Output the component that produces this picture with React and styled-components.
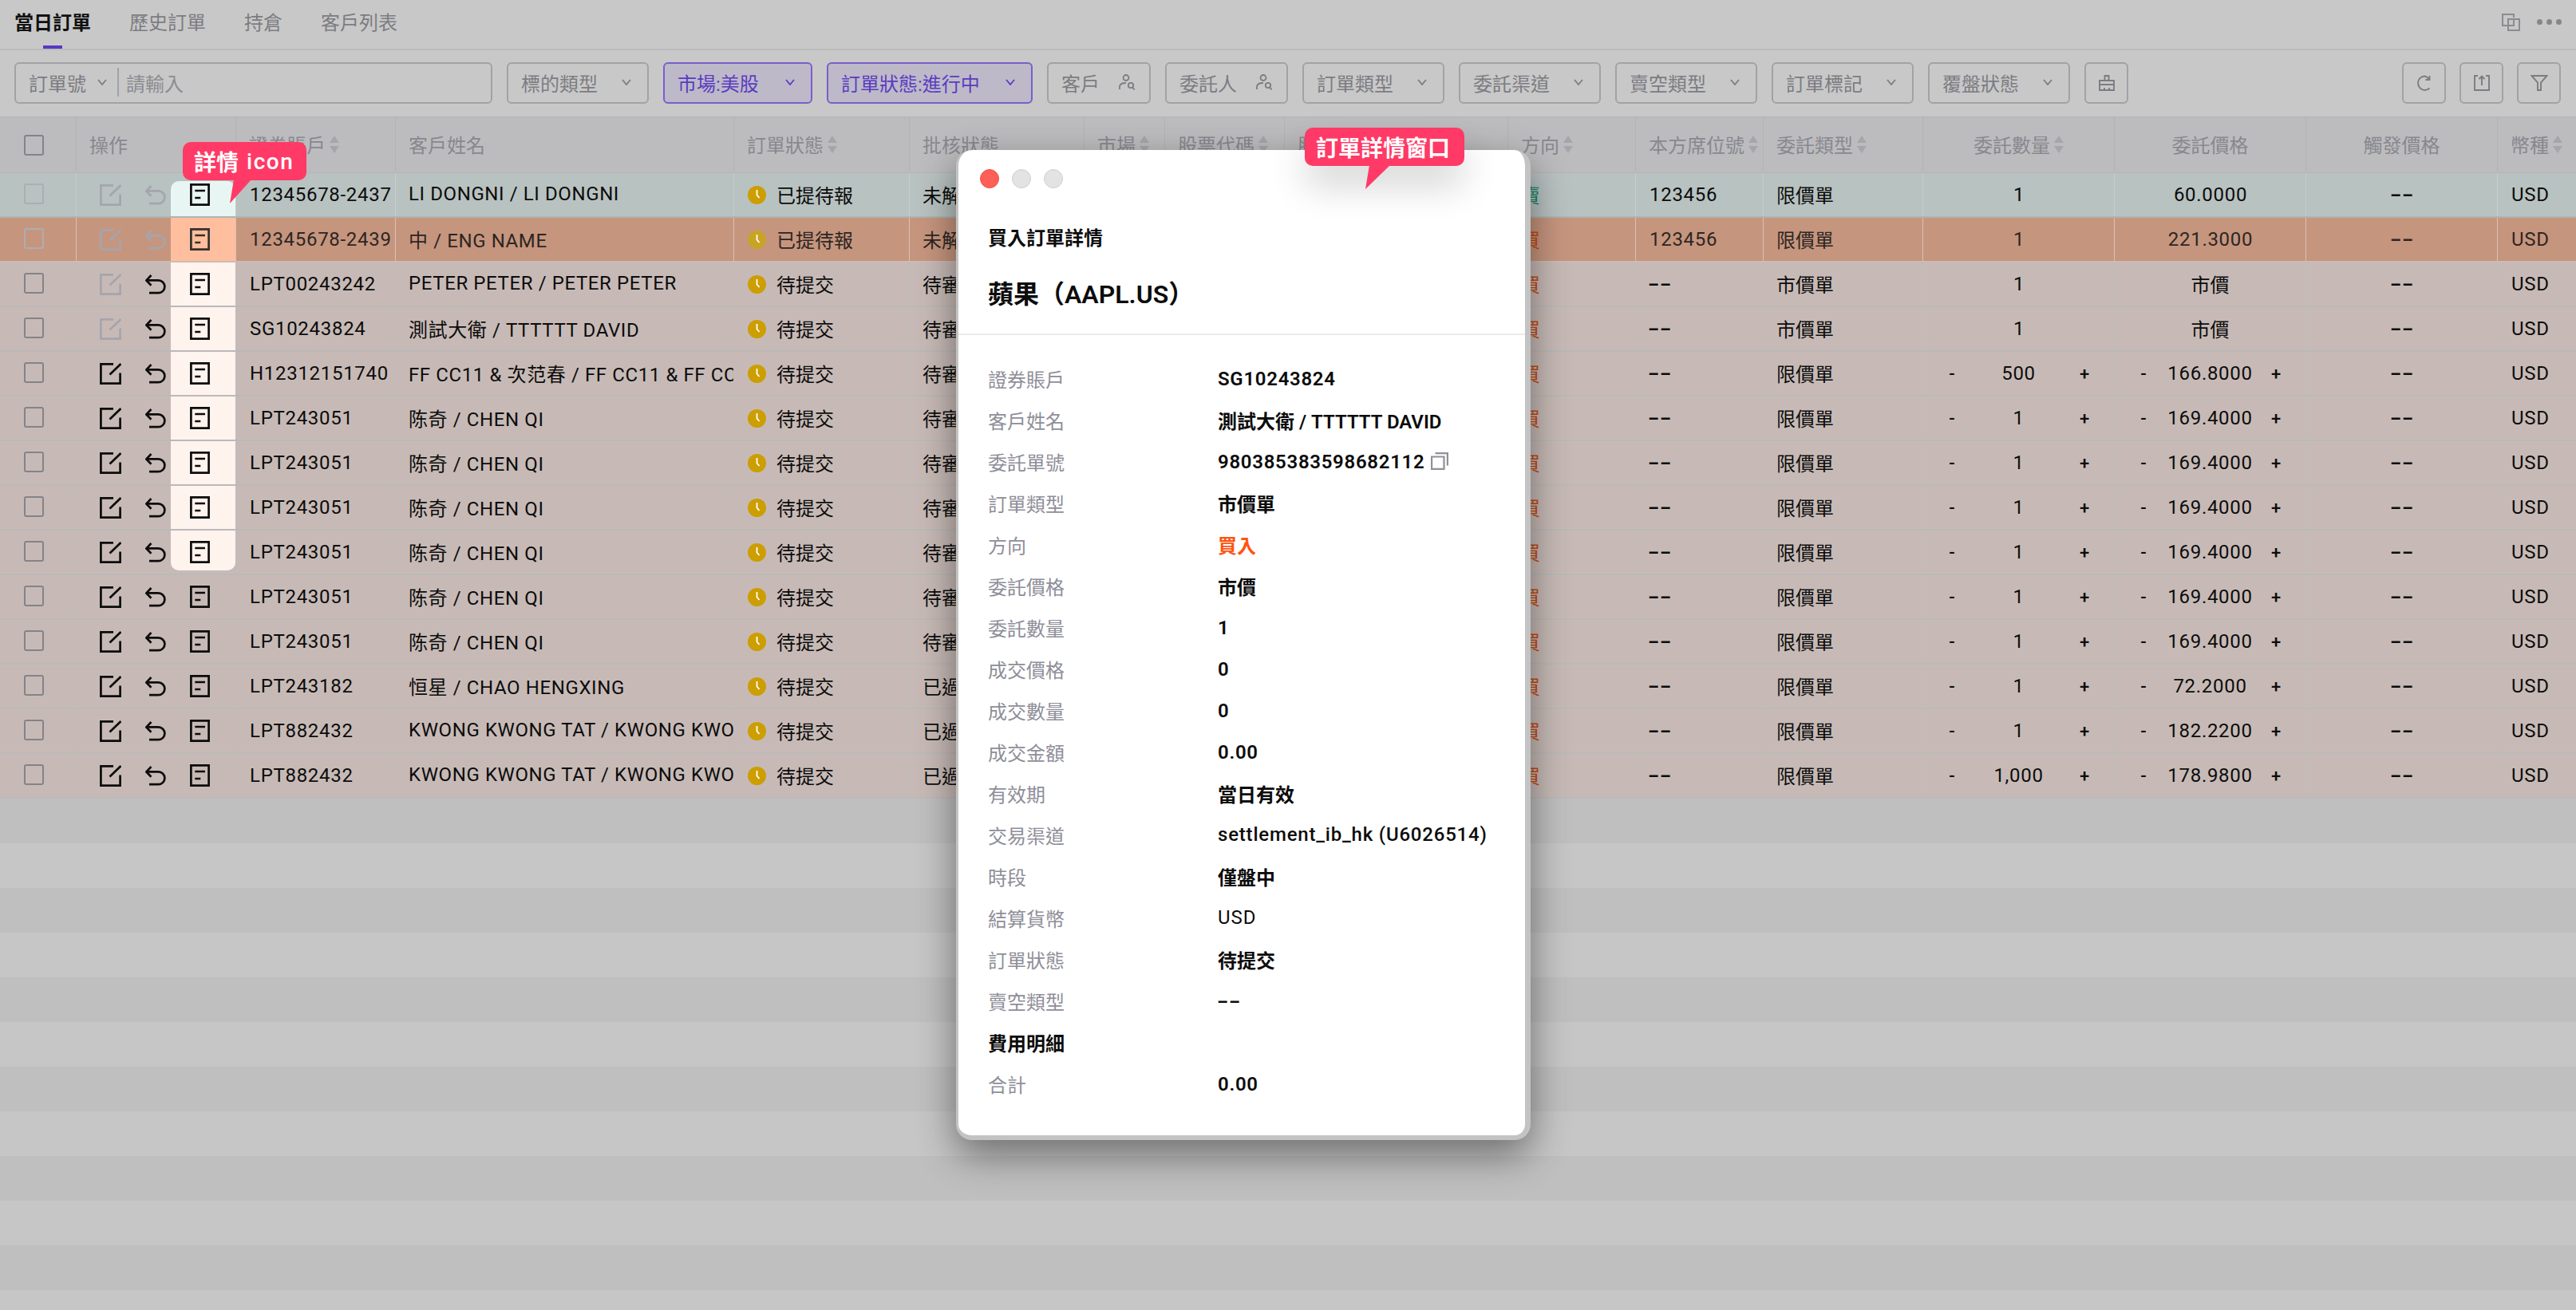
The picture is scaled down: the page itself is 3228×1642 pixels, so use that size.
import React from "react";
import styled, { createGlobalStyle } from "styled-components";

const Global = createGlobalStyle`
  html, body { margin: 0; padding: 0; background: #c8c8c8; }
  * { box-sizing: border-box; }
  body { font-family: Roboto, "Noto Sans CJK TC", sans-serif; font-size: 24px; color: #0c0c0c; }
`;

const Page = styled.div`
  position: relative;
  width: 3228px;
  height: 1642px;
  overflow: hidden;
  background: #c8c8c8;
`;

// top tabs
const Tabs = styled.div`
  height: 63px;
  padding: 0 18px 0 18px;
  display: flex;
  gap: 48px;
  border-bottom: 2px solid #bcbcbc;
`;
const Tab = styled.div`
  position: relative;
  height: 57px;
  line-height: 58px;
  color: ${(p) => (p.$active ? "#111" : "#7c7c82")};
  font-weight: ${(p) => (p.$active ? 600 : 400)};
  ${(p) =>
    p.$active &&
    `&:after { content: ""; position: absolute; left: 36px; bottom: -4px; width: 24px; height: 4px; background: #5b36c4; }`}
`;
const TabTools = styled.div`
  margin-left: auto;
  display: flex;
  align-items: center;
  gap: 21px;
  height: 55px;
  color: #8b8b90;
`;
const Dots = styled.div`
  display: flex;
  gap: 5px;
  width: 31px;
  span { width: 7px; height: 7px; border-radius: 50%; background: #86868b; }
`;

// filter bar
const Toolbar = styled.div`
  height: 83px;
  padding: 15px 19px 16px 18px;
  display: flex;
  gap: 18px;
`;
const Filter = styled.div`
  width: ${(p) => p.$w}px;
  height: 52px;
  flex: none;
  padding: 0 ${(p) => p.$pr || 20}px 2px 16px;
  display: flex;
  align-items: center;
  justify-content: space-between;
  border: 2px solid ${(p) => (p.$on ? "#7a5ecb" : "#a2a2a7")};
  border-radius: 6px;
  background: ${(p) => (p.$on ? "#bdb9c9" : "transparent")};
  color: ${(p) => (p.$on ? "#5a3cc0" : "#7c7c82")};
`;
const SearchBox = styled(Filter)`
  padding: 0 0 2px 16px;
  justify-content: flex-start;
`;
const SearchKey = styled.div`
  display: flex;
  align-items: center;
  gap: 14px;
  padding-right: 13px;
  height: 36px;
  border-right: 2px solid #a2a2a7;
`;
const SearchHint = styled.div`
  padding-left: 9px;
  color: #8c8c92;
`;
const IconButton = styled.div`
  width: 55px;
  height: 52px;
  flex: none;
  display: flex;
  align-items: center;
  justify-content: center;
  border: 2px solid #a2a2a7;
  border-radius: 6px;
  color: #7c7c82;
`;
const RightTools = styled.div`
  margin-left: auto;
  display: flex;
  gap: 17px;
`;

// table
const columns = "95px 200px 200px 424px 220px 219px 101px 150px 280px 160px 160px 200px 240px 240px 240px 99px";
const HeadRow = styled.div`
  display: grid;
  grid-template-columns: ${columns};
  height: 71px;
  background: #bcbcbe;
  border-top: 1px solid #b4b4b6;
  border-bottom: 1px solid #b6b6b8;
`;
const HeadCell = styled.div`
  display: flex;
  align-items: center;
  justify-content: ${(p) => (p.$center ? "center" : "flex-start")};
  gap: 5px;
  padding-left: ${(p) => (p.$center ? 0 : 16)}px;
  padding-bottom: 2px;
  border-left: 1px solid #b3b3b5;
  color: #88888e;
  white-space: nowrap;
  overflow: hidden;
`;
const HeadCheck = styled.div`
  display: flex;
  align-items: center;
  padding-left: 30px;
`;
const SortMark = styled.span`
  display: inline-flex;
  flex-direction: column;
  gap: 4px;
  flex: none;
  &:before, &:after {
    content: "";
    width: 0;
    height: 0;
    border-left: 6px solid transparent;
    border-right: 6px solid transparent;
  }
  &:before { border-bottom: 9px solid #a6a6aa; }
  &:after { border-top: 9px solid #a6a6aa; }
`;
const tones = {
  normal: { bg: "#c7bab6", line: "#bcb9b8", cell: "#bfbcbb", spot: "#fff3ee" },
  teal: { bg: "#b8c2c0", line: "#adb5b4", cell: "#c6cdcc", spot: "#e8f6f3" },
  orange: { bg: "#c6957e", line: "#c9bcb5", cell: "#d8c2b6", spot: "#ffbf9e" },
};
const Row = styled.div`
  display: grid;
  grid-template-columns: ${columns};
  height: 56px;
  background: ${(p) => tones[p.$tone].bg};
  border-bottom: 2px solid ${(p) => tones[p.$tone].line};
  color: ${(p) => (p.$tone === "orange" ? "#2c2622" : "#0c0c0c")};
`;
const Cell = styled.div`
  display: flex;
  align-items: center;
  justify-content: ${(p) => (p.$center ? "center" : "flex-start")};
  padding-left: ${(p) => (p.$center ? 0 : 16)}px;
  padding-bottom: 2px;
  border-left: ${(p) => (p.$first ? "none" : `1px solid ${tones[p.$tone].cell}`)};
  white-space: nowrap;
  overflow: hidden;
`;
const CheckCell = styled(Cell)`
  padding-left: 30px;
`;
const CheckBox = styled.span`
  width: 25px;
  height: 26px;
  border: 2px solid ${(p) => (p.$off ? "#adadb2" : "#83838a")};
  border-radius: 3px;
`;
const ActionCell = styled(Cell)`
  padding: 0;
  align-items: stretch;
  justify-content: space-between;
`;
const ActionIcons = styled.div`
  display: flex;
  align-items: center;
  gap: 30px;
  padding-left: 29px;
`;
const Spot = styled.div`
  width: 81px;
  flex: none;
  display: flex;
  align-items: center;
  justify-content: center;
  padding-right: 8px;
  color: ${(p) => (p.$dim ? "#33312f" : "#0c0c0c")};
  background: ${(p) => p.$bg || "transparent"};
  ${(p) => p.$start && "margin-top: 10px; padding-bottom: 10px; border-radius: 10px 10px 0 0;"}
  ${(p) => p.$end && "margin-bottom: 4px; padding-top: 4px; border-radius: 0 0 10px 10px;"}
`;
const Num = styled.span`
  display: inline-block;
  padding-top: 2px;
  margin-left: 1px;
  letter-spacing: 0.7px;
`;
const Name = styled.span`
  letter-spacing: 0.6px;
`;
const Dash = styled.span`
  display: inline-block;
  font-weight: 600;
  padding-top: 2px;
  margin-left: ${(p) => (p.$left ? 5 : 0)}px;
  transform: scaleX(1.7);
`;
const StatusDot = styled.span`
  width: 23px;
  height: 23px;
  flex: none;
  margin: 2px 13px 0 1px;
  color: ${(p) => (p.$dim ? "#c9a326" : "#cc9e02")};
  display: inline-flex;
`;
const Direction = styled.span`
  color: ${(p) => (p.$sell ? "#14866a" : "#c74a12")};
`;
const Stepper = styled.div`
  width: 100%;
  padding: 0 30px 0 29px;
  display: flex;
  align-items: center;
  justify-content: space-between;
`;
const StepMark = styled.span`
  width: 14px;
  text-align: center;
  font-size: 22px;
  font-weight: 500;
  padding-top: 2px;
`;
const Stripe = styled.div`
  height: 56px;
  background: ${(p) => (p.$light ? "#c6c6c6" : "#bfbfbf")};
`;

// order detail window
const Modal = styled.div`
  position: absolute;
  left: 1198px;
  top: 188px;
  width: 720px;
  background: #fff;
  border-style: solid;
  border-color: #c3c3c3;
  border-width: 0 7px 6px 3px;
  border-radius: 20px;
  box-shadow: 0 18px 48px rgba(0, 0, 0, 0.45);
`;
const ModalHead = styled.div`
  padding: 24px 37px 27px;
  border-bottom: 2px solid #ececec;
`;
const Lights = styled.div`
  display: flex;
  gap: 16px;
  margin-left: -10px;
`;
const Light = styled.span`
  width: 24px;
  height: 24px;
  border-radius: 50%;
  background: ${(p) => (p.$red ? "#fe5f57" : "#e3e3e3")};
  border: 1px solid ${(p) => (p.$red ? "#ee4f47" : "#cfcfcf")};
`;
const ModalKicker = styled.div`
  margin-top: 46px;
  line-height: 34px;
  font-weight: 600;
`;
const ModalTitle = styled.div`
  margin-top: 31px;
  line-height: 44px;
  font-size: 32px;
  font-weight: 600;
`;
const ModalBody = styled.div`
  padding: 28px 0 39px 37px;
`;
const InfoRow = styled.div`
  display: grid;
  grid-template-columns: 288px 1fr;
  align-items: center;
  height: 52px;
`;
const InfoLabel = styled.div`
  color: ${(p) => (p.$strong ? "#0c0c0c" : "#8e8e99")};
  font-weight: ${(p) => (p.$strong ? 600 : 400)};
`;
const InfoValue = styled.div`
  display: flex;
  align-items: center;
  gap: 8px;
  color: ${(p) => (p.$buy ? "#ff5310" : "#0c0c0c")};
  font-weight: ${(p) => p.$weight || 600};
  letter-spacing: ${(p) => p.$track || 0}px;
  white-space: nowrap;
`;
const InfoNum = styled(Num)`
  margin-left: 0;
`;

// pink callouts
const Callout = styled.div`
  position: absolute;
  left: ${(p) => p.$x}px;
  top: ${(p) => p.$y}px;
  width: ${(p) => p.$w}px;
  height: 48px;
  padding-left: 14px;
  display: flex;
  align-items: center;
  background: #ff3a66;
  border-radius: 10px;
  color: #fff;
  font-size: 28px;
  font-weight: 700;
  white-space: pre;
  ${(p) => p.$glow && "box-shadow: 0 26px 46px rgba(0,0,0,.16);"}
`;
const CalloutLatin = styled.span`
  letter-spacing: 1.5px;
  margin-left: 10px;
  font-weight: 500;
`;
const CalloutTail = styled.svg`
  position: absolute;
  left: ${(p) => p.$x}px;
  top: 47px;
`;

const Chevron = () => (
  <svg width="12" height="8" viewBox="0 0 12 8" fill="none" stroke="currentColor" strokeWidth="1.8">
    <path d="M1 1l5 6 5-6" />
  </svg>
);
const PersonSearch = () => (
  <svg width="21" height="20" viewBox="0 0 21 20" fill="none" stroke="currentColor" strokeWidth="1.8">
    <circle cx="9" cy="4.5" r="3.5" />
    <path d="M1 19v-3c0-3 3-5 8-5" />
    <circle cx="15" cy="14" r="3.2" />
    <path d="M17.2 16.5l2.4 3" />
  </svg>
);
const Broom = () => (
  <svg width="22" height="20" viewBox="0 0 22 20" fill="none" stroke="currentColor" strokeWidth="1.9">
    <path d="M8.5 6V1h5v5" />
    <path d="M2 7h18v12H2z" />
    <path d="M2 12h18M8 19v-3M14 19v-3" />
  </svg>
);
const Refresh = () => (
  <svg width="22" height="20" viewBox="0 0 22 20" fill="none" stroke="currentColor" strokeWidth="1.9">
    <path d="M17 5.2a9 9 0 0 0-5.5-3.7C7 1.5 3 5 3 10s4 9 8.5 9a9 9 0 0 0 6-2.500" />
    <path d="M17.500 1v5h-5" />
  </svg>
);
const Export = () => (
  <svg width="20" height="20" viewBox="0 0 20 20" fill="none" stroke="currentColor" strokeWidth="1.9">
    <path d="M5 1H1v18h18V1h-4" />
    <path d="M10 13V1.500M6.500 5L10 1.500 13.500 5" />
  </svg>
);
const Funnel = () => (
  <svg width="22" height="20" viewBox="0 0 22 20" fill="none" stroke="currentColor" strokeWidth="1.9">
    <path d="M1.500 1h19L13 9.500V19h-4V9.500z" />
  </svg>
);
const Windows = () => (
  <svg width="23" height="22" viewBox="0 0 23 22" fill="none" stroke="currentColor" strokeWidth="2">
    <path d="M15 5V1H1v14h7" />
    <path d="M8 7h14v14H8z" />
    <path d="M8 7v8h7V7" />
  </svg>
);
const EditIcon = ({ off }) => (
  <svg width="27" height="27" viewBox="0 0 27 27" fill="none" stroke={off ? "#a5a5ad" : "currentColor"} strokeWidth="2.700">
    <path d="M17 1.400H1.400v24.200h24.200V12.500" />
    <path d="M12.500 14.500L26.500 1" />
  </svg>
);
const UndoIcon = ({ off }) => (
  <svg width="26" height="25" viewBox="0 0 26 25" fill="none" stroke={off ? "#a5a5ad" : "currentColor"} strokeWidth="2.700">
    <path d="M7.500 1L1.400 7.400l6.100 6.300" />
    <path d="M1.400 7.400h15.100a7.900 7.900 0 0 1 0 15.800H5" />
  </svg>
);
const DocIcon = () => (
  <svg width="25" height="28" viewBox="0 0 25 28" fill="none" stroke="currentColor" strokeWidth="2.700">
    <path d="M1.400 1.400h22.200v25.200H1.400z" />
    <path d="M6.300 9h12.700M6.300 18h7" />
  </svg>
);
const ClockIcon = () => (
  <svg width="23" height="23" viewBox="0 0 23 23">
    <circle cx="11.500" cy="11.500" r="11.500" fill="currentColor" />
    <path d="M11.500 5v6.500l3 3.500" fill="none" stroke="#fff" strokeWidth="1.800" />
  </svg>
);
const CopyIcon = () => (
  <svg width="22" height="22" viewBox="0 0 22 22" fill="none" stroke="#8f8f99" strokeWidth="2.200">
    <path d="M1.100 5.500h15.400v15.400H1.100z" />
    <path d="M5.500 1.100h15.400v15.400" />
  </svg>
);

const head = [
  { label: "操作" },
  { label: "證券賬戶", sort: true },
  { label: "客戶姓名" },
  { label: "訂單狀態", sort: true },
  { label: "批核狀態" },
  { label: "市場", sort: true },
  { label: "股票代碼", sort: true },
  { label: "股票名稱" },
  { label: "方向", sort: true },
  { label: "本方席位號", sort: true },
  { label: "委託類型", sort: true },
  { label: "委託數量", sort: true, center: true },
  { label: "委託價格", center: true },
  { label: "觸發價格", center: true },
  { label: "幣種", sort: true },
];

const chen = "陈奇 / CHEN QI";
const kwong = "KWONG KWONG TAT / KWONG KWONG TAT";
const orders = [
  { acc: "12345678-2437", name: "LI DONGNI / LI DONGNI", status: "已提待報", audit: "未解鎖", sell: true, seat: "123456", type: "限價單", qty: "1", price: "60.0000", tone: "teal", off: 2 },
  { acc: "12345678-2439", name: "中 / ENG NAME", status: "已提待報", audit: "未解鎖", seat: "123456", type: "限價單", qty: "1", price: "221.3000", tone: "orange", off: 2 },
  { acc: "LPT00243242", name: "PETER PETER / PETER PETER", status: "待提交", audit: "待審批", type: "市價單", qty: "1", price: "市價", off: 1 },
  { acc: "SG10243824", name: "測試大衛 / TTTTTT DAVID", status: "待提交", audit: "待審批", type: "市價單", qty: "1", price: "市價", off: 1 },
  { acc: "H12312151740", name: "FF CC11 & 次范春 / FF CC11 & FF CC11", status: "待提交", audit: "待審批", type: "限價單", qty: "500", price: "166.8000", step: true },
  { acc: "LPT243051", name: chen, status: "待提交", audit: "待審批", type: "限價單", qty: "1", price: "169.4000", step: true },
  { acc: "LPT243051", name: chen, status: "待提交", audit: "待審批", type: "限價單", qty: "1", price: "169.4000", step: true },
  { acc: "LPT243051", name: chen, status: "待提交", audit: "待審批", type: "限價單", qty: "1", price: "169.4000", step: true },
  { acc: "LPT243051", name: chen, status: "待提交", audit: "待審批", type: "限價單", qty: "1", price: "169.4000", step: true },
  { acc: "LPT243051", name: chen, status: "待提交", audit: "待審批", type: "限價單", qty: "1", price: "169.4000", step: true },
  { acc: "LPT243051", name: chen, status: "待提交", audit: "待審批", type: "限價單", qty: "1", price: "169.4000", step: true },
  { acc: "LPT243182", name: "恒星 / CHAO HENGXING", status: "待提交", audit: "已過審", type: "限價單", qty: "1", price: "72.2000", step: true },
  { acc: "LPT882432", name: kwong, status: "待提交", audit: "已過審", type: "限價單", qty: "1", price: "182.2200", step: true },
  { acc: "LPT882432", name: kwong, status: "待提交", audit: "已過審", type: "限價單", qty: "1,000", price: "178.9800", step: true },
];

const details = [
  { label: "證券賬戶", num: "SG10243824" },
  { label: "客戶姓名", text: "測試大衛 / TTTTTT DAVID" },
  { label: "委託單號", num: "980385383598682112", copy: true },
  { label: "訂單類型", text: "市價單" },
  { label: "方向", text: "買入", buy: true },
  { label: "委託價格", text: "市價" },
  { label: "委託數量", num: "1" },
  { label: "成交價格", num: "0" },
  { label: "成交數量", num: "0" },
  { label: "成交金額", num: "0.00" },
  { label: "有效期", text: "當日有效" },
  { label: "交易渠道", text: "settlement_ib_hk (U6026514)", weight: 500, track: 0.8 },
  { label: "時段", text: "僅盤中" },
  { label: "結算貨幣", text: "USD", weight: 400, track: 1 },
  { label: "訂單狀態", text: "待提交" },
  { label: "賣空類型", dash: true },
  { label: "費用明細", strong: true },
  { label: "合計", num: "0.00" },
];

const filters = [
  ["標的類型", 178],
  ["市場:美股", 187, true],
  ["訂單狀態:進行中", 258, true],
  ["客戶", 130, false, true],
  ["委託人", 154, false, true],
  ["訂單類型", 178],
  ["委託渠道", 178],
  ["賣空類型", 178],
  ["訂單標記", 178],
  ["覆盤狀態", 178],
];

const Stepped = ({ value }) => (
  <Stepper>
    <StepMark>-</StepMark>
    <Num>{value}</Num>
    <StepMark>+</StepMark>
  </Stepper>
);

export default function App() {
  return (
    <Page>
      <Global />
      <Tabs>
        <Tab $active>當日訂單</Tab>
        <Tab>歷史訂單</Tab>
        <Tab>持倉</Tab>
        <Tab>客戶列表</Tab>
        <TabTools>
          <Windows />
          <Dots>
            <span />
            <span />
            <span />
          </Dots>
        </TabTools>
      </Tabs>

      <Toolbar>
        <SearchBox $w={599}>
          <SearchKey>
            訂單號
            <Chevron />
          </SearchKey>
          <SearchHint>請輸入</SearchHint>
        </SearchBox>
        {filters.map(([label, w, on, person]) => (
          <Filter key={label} $w={w} $on={on} $pr={person ? 17 : 20}>
            {label}
            {person ? <PersonSearch /> : <Chevron />}
          </Filter>
        ))}
        <IconButton>
          <Broom />
        </IconButton>
        <RightTools>
          <IconButton>
            <Refresh />
          </IconButton>
          <IconButton>
            <Export />
          </IconButton>
          <IconButton>
            <Funnel />
          </IconButton>
        </RightTools>
      </Toolbar>

      <HeadRow>
        <HeadCheck>
          <CheckBox />
        </HeadCheck>
        {head.map((h) => (
          <HeadCell key={h.label} $center={h.center}>
            {h.label}
            {h.sort && <SortMark />}
          </HeadCell>
        ))}
      </HeadRow>

      {orders.map((o, i) => {
        const tone = o.tone || "normal";
        const cell = { $tone: tone };
        return (
          <Row key={i} $tone={tone}>
            <CheckCell $first {...cell}>
              <CheckBox $off={o.off === 2} />
            </CheckCell>
            <ActionCell {...cell}>
              <ActionIcons>
                <EditIcon off={o.off > 0} />
                <UndoIcon off={o.off === 2} />
              </ActionIcons>
              <Spot $bg={i < 9 ? tones[tone].spot : null} $start={i === 0} $end={i === 8} $dim={tone === "orange"}>
                <DocIcon />
              </Spot>
            </ActionCell>
            <Cell {...cell}>
              <Num>{o.acc}</Num>
            </Cell>
            <Cell {...cell}>
              <Name>{o.name}</Name>
            </Cell>
            <Cell {...cell}>
              <StatusDot $dim={tone === "orange"}>
                <ClockIcon />
              </StatusDot>
              {o.status}
            </Cell>
            <Cell {...cell}>{o.audit}</Cell>
            <Cell {...cell}>美股</Cell>
            <Cell {...cell}>AAPL</Cell>
            <Cell {...cell}>蘋果</Cell>
            <Cell {...cell}>
              <Direction $sell={o.sell}>{o.sell ? "賣" : "買"}</Direction>
            </Cell>
            <Cell {...cell}>{o.seat ? <Num>{o.seat}</Num> : <Dash $left>--</Dash>}</Cell>
            <Cell {...cell}>{o.type}</Cell>
            <Cell $center {...cell}>
              {o.step ? <Stepped value={o.qty} /> : <Num>{o.qty}</Num>}
            </Cell>
            <Cell $center {...cell}>
              {o.step ? <Stepped value={o.price} /> : o.price === "市價" ? o.price : <Num>{o.price}</Num>}
            </Cell>
            <Cell $center {...cell}>
              <Dash>--</Dash>
            </Cell>
            <Cell {...cell}>
              <Num>USD</Num>
            </Cell>
          </Row>
        );
      })}

      {Array.from({ length: 12 }, (_, i) => (
        <Stripe key={i} $light={i % 2 === 1} />
      ))}

      <Modal>
        <ModalHead>
          <Lights>
            <Light $red />
            <Light />
            <Light />
          </Lights>
          <ModalKicker>買入訂單詳情</ModalKicker>
          <ModalTitle>蘋果（AAPL.US）</ModalTitle>
        </ModalHead>
        <ModalBody>
          {details.map((d) => (
            <InfoRow key={d.label}>
              <InfoLabel $strong={d.strong}>{d.label}</InfoLabel>
              <InfoValue $buy={d.buy} $weight={d.weight} $track={d.track}>
                {d.num && <InfoNum>{d.num}</InfoNum>}
                {d.text}
                {d.dash && <Dash $left>--</Dash>}
                {d.copy && <CopyIcon />}
              </InfoValue>
            </InfoRow>
          ))}
        </ModalBody>
      </Modal>

      <Callout $x={229} $y={178} $w={155}>
        詳情
        <CalloutLatin>icon</CalloutLatin>
        <CalloutTail $x={59} width="28" height="31" viewBox="0 0 28 31">
          <path d="M5 0h22L0 30z" fill="#ff3a66" />
        </CalloutTail>
      </Callout>
      <Callout $x={1635} $y={160} $w={200} $glow>
        訂單詳情窗口
        <CalloutTail $x={76} width="32" height="31" viewBox="0 0 32 31">
          <path d="M5 0h26L0 30z" fill="#ff3a66" />
        </CalloutTail>
      </Callout>
    </Page>
  );
}
